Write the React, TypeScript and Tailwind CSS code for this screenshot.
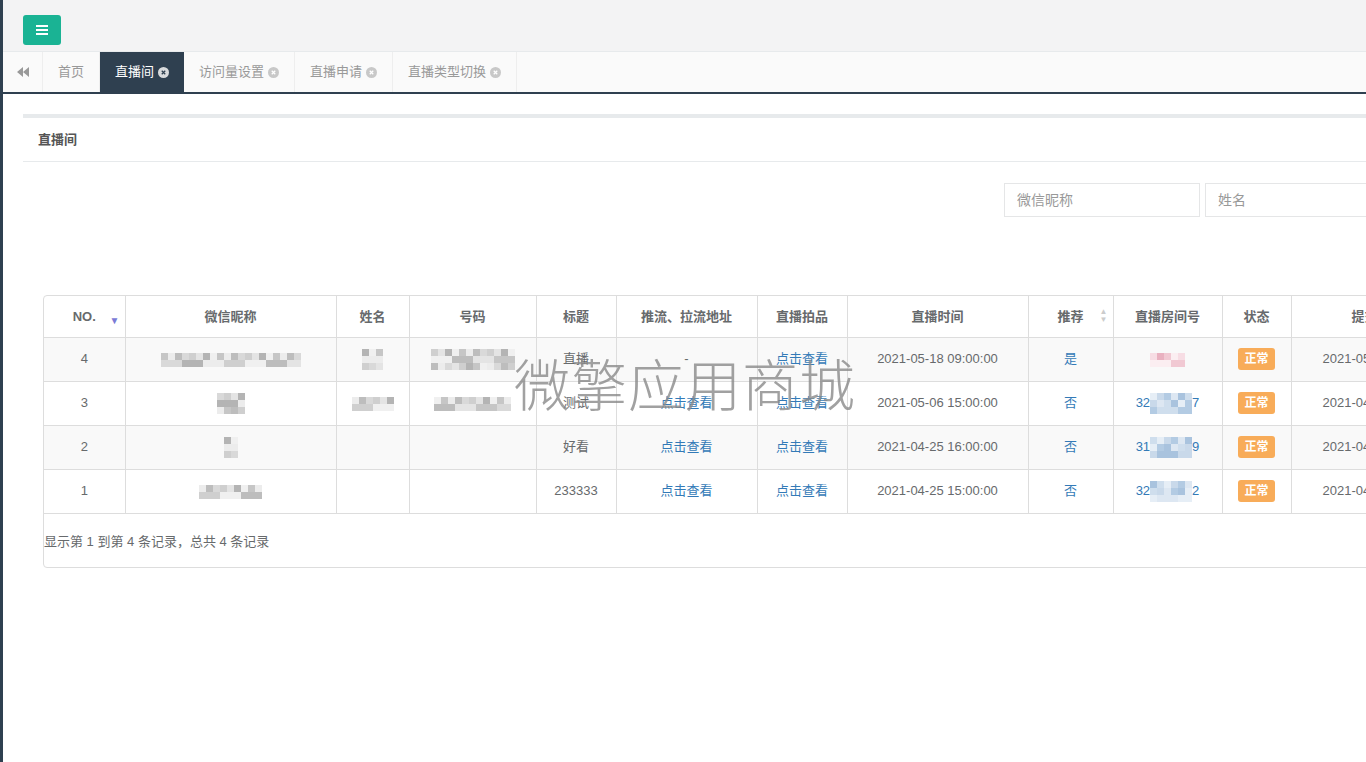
import React from 'react';

const font = { fontFamily: '"Liberation Sans", "Noto Sans CJK SC", sans-serif' };

type Row = {
  no: number;
  nick: [number, number];
  name?: [number, number];
  phone?: [number, number];
  title: string;
  stream: string;
  goods: string;
  time: string;
  rec: string;
  room: { pre: string; post: string; pink?: boolean };
  date: string;
};

const rows: Row[] = [
  { no: 4, nick: [140, 2], name: [24, 3], phone: [86, 3], title: '直播', stream: '-', goods: '点击查看', time: '2021-05-18 09:00:00', rec: '是', room: { pre: '', post: '', pink: true }, date: '2021-05-17 10:21:33' },
  { no: 3, nick: [30, 3], name: [40, 2], phone: [80, 2], title: '测试', stream: '点击查看', goods: '点击查看', time: '2021-05-06 15:00:00', rec: '否', room: { pre: '32', post: '7' }, date: '2021-04-28 11:02:10' },
  { no: 2, nick: [14, 3], title: '好看', stream: '点击查看', goods: '点击查看', time: '2021-04-25 16:00:00', rec: '否', room: { pre: '31', post: '9' }, date: '2021-04-25 14:10:42' },
  { no: 1, nick: [62, 2], title: '233333', stream: '点击查看', goods: '点击查看', time: '2021-04-25 15:00:00', rec: '否', room: { pre: '32', post: '2' }, date: '2021-04-25 13:48:05' },
];

const shades = ['#e4e4e4', '#cfcfcf', '#d9d9d9', '#bdbdbd', '#ececec', '#c6c6c6', '#f0f0f0', '#b4b4b4'];
const blues = ['#c9d9ea', '#b3cbe3', '#dde7f2', '#a9c3de', '#cfdeed', '#e6eef6'];

// pixelated stand-in for the mosaic-blurred cells
function Blur({ w, lines, palette = shades, seed = 1 }: { w: number; lines: number; palette?: string[]; seed?: number }) {
  const cols = Math.max(1, Math.round(w / 7));
  const cells = [];
  for (let r = 0; r < lines; r++) {
    for (let c = 0; c < cols; c++) {
      const i = (c * 7 + r * 13 + seed * 5 + ((c * r) % 3)) % palette.length;
      cells.push(<span key={`${r}-${c}`} className="block h-[7px] w-[7px]" style={{ backgroundColor: palette[i] }} />);
    }
  }
  return (
    <span className="inline-grid align-middle" style={{ gridTemplateColumns: `repeat(${cols}, 7px)` }}>
      {cells}
    </span>
  );
}

function CloseDot({ active }: { active?: boolean }) {
  return (
    <span className={`ml-1 inline-flex h-[11px] w-[11px] items-center justify-center rounded-full ${active ? 'bg-[#d8dadc]' : 'bg-[#c8c8c8]'}`}>
      <svg viewBox="0 0 10 10" className="h-[7px] w-[7px]">
        <path d="M2.5 2.5 L7.5 7.5 M7.5 2.5 L2.5 7.5" stroke={active ? '#2f4050' : '#fff'} strokeWidth="1.8" />
      </svg>
    </span>
  );
}

const tabs = ['访问量设置', '直播申请', '直播类型切换'];
const widths = [81, 211, 73, 127, 80, 141, 90, 181, 85, 109, 69, 150];
const cell = 'border border-[#ddd] whitespace-nowrap';

export default function App() {
  return (
    <div className="relative flex h-[762px] w-[1366px] overflow-hidden bg-white text-[13px] text-[#676a6c]" style={font}>
      <div className="w-[3px] shrink-0 bg-[#2f4050]" />
      <div className="flex min-w-0 flex-1 flex-col">
        {/* top bar */}
        <div className="flex h-[52px] shrink-0 items-start border-b border-[#e7eaec] bg-[#f3f3f4] pl-[20px] pt-[15px]">
          <button className="flex h-[30px] w-[38px] items-center justify-center rounded-[3px] bg-[#1ab394]">
            <svg viewBox="0 0 12 10" className="h-[10px] w-[12px]">
              <path d="M0 1 H12 M0 5 H12 M0 9 H12" stroke="#fff" strokeWidth="1.8" />
            </svg>
          </button>
        </div>
        {/* tabs */}
        <div className="flex h-[42px] shrink-0 border-b-2 border-[#2f4050] bg-[#fafafa]">
          <div className="flex w-[40px] items-center justify-center border-r border-[#eee]">
            <svg viewBox="0 0 12 10" className="h-[10px] w-[12px]">
              <path d="M6 0 L0 5 L6 10 Z M12 0 L6 5 L12 10 Z" fill="#999" />
            </svg>
          </div>
          <div className="flex w-[57px] items-center justify-center border-r border-[#eee] text-[#999]">首页</div>
          <div className="flex w-[84px] items-center justify-center bg-[#2f4050] text-white">
            直播间
            <CloseDot active />
          </div>
          {tabs.map((t) => (
            <div key={t} className="flex items-center border-r border-[#eee] px-[15px] text-[#999]">
              {t}
              <CloseDot />
            </div>
          ))}
        </div>
        {/* content */}
        <div className="flex-1 pl-[20px] pt-[20px]">
          <div className="border-t-4 border-[#e7eaec]">
            <div className="flex h-[44px] items-center border-b border-[#e7eaec] px-[15px] font-bold text-[#555]">直播间</div>
            <div className="flex h-[133px] items-start gap-[5px] pl-[981px] pt-[21px]">
              <input placeholder="微信昵称" className="h-[34px] w-[196px] shrink-0 border border-[#e5e6e7] px-[12px] text-[14px] placeholder:text-[#999]" />
              <input placeholder="姓名" className="h-[34px] w-[196px] shrink-0 border border-[#e5e6e7] px-[12px] text-[14px] placeholder:text-[#999]" />
            </div>
            <div className="ml-[20px] h-[273px] w-[1500px] rounded-[4px] border border-[#ddd]">
              <table className="table-fixed border-collapse text-center" style={{ width: 1397 }}>
                <colgroup>
                  {widths.map((w, i) => (
                    <col key={i} style={{ width: w }} />
                  ))}
                </colgroup>
                <thead>
                  <tr className="h-[41px] font-bold text-[#676a6c]">
                    <th className="relative border-b border-r border-[#ddd]">
                      NO.
                      <span className="absolute right-[5px] top-[17px] text-[10px] text-[#7b7bd6]">▼</span>
                    </th>
                    <th className={`${cell} border-t-0`}>微信昵称</th>
                    <th className={`${cell} border-t-0`}>姓名</th>
                    <th className={`${cell} border-t-0`}>号码</th>
                    <th className={`${cell} border-t-0`}>标题</th>
                    <th className={`${cell} border-t-0`}>推流、拉流地址</th>
                    <th className={`${cell} border-t-0`}>直播拍品</th>
                    <th className={`${cell} border-t-0`}>直播时间</th>
                    <th className={`${cell} relative border-t-0`}>
                      推荐
                      <span className="absolute right-[5px] top-[12px] flex flex-col text-[8px] leading-[8px] text-[#ccc]">
                        <span>▲</span>
                        <span>▼</span>
                      </span>
                    </th>
                    <th className={`${cell} border-t-0`}>直播房间号</th>
                    <th className={`${cell} border-t-0`}>状态</th>
                    <th className={`${cell} border-t-0 pl-[60px] text-left`}>提交时间</th>
                  </tr>
                </thead>
                <tbody>
                  {rows.map((r, i) => (
                    <tr key={r.no} className={`h-[44px] ${i % 2 === 0 ? 'bg-[#f9f9f9]' : 'bg-white'}`}>
                      <td className="border-b border-r border-[#ddd]">{r.no}</td>
                      <td className={cell}>
                        <Blur w={r.nick[0]} lines={r.nick[1]} seed={i + 1} />
                      </td>
                      <td className={cell}>{r.name && <Blur w={r.name[0]} lines={r.name[1]} seed={i + 3} />}</td>
                      <td className={cell}>{r.phone && <Blur w={r.phone[0]} lines={r.phone[1]} seed={i + 5} />}</td>
                      <td className={cell}>{r.title}</td>
                      <td className={`${cell} ${r.stream === '-' ? '' : 'text-[#337ab7]'}`}>{r.stream}</td>
                      <td className={`${cell} text-[#337ab7]`}>{r.goods}</td>
                      <td className={cell}>{r.time}</td>
                      <td className={`${cell} text-[#337ab7]`}>{r.rec}</td>
                      <td className={`${cell} text-[#337ab7]`}>
                        {r.room.pink ? (
                          <Blur w={35} lines={2} palette={['#f1c9d3', '#e9b1c0', '#f7dde4', '#fbeef1']} seed={2} />
                        ) : (
                          <span className="inline-flex items-center">
                            {r.room.pre}
                            <Blur w={42} lines={3} palette={blues} seed={i} />
                            {r.room.post}
                          </span>
                        )}
                      </td>
                      <td className={cell}>
                        <span className="inline-block rounded-[3px] bg-[#f8ac59] px-[6px] py-[3px] text-[12px] font-bold leading-[16px] text-white">正常</span>
                      </td>
                      <td className={`${cell} pl-[31px] text-left`}>{r.date}</td>
                    </tr>
                  ))}
                </tbody>
              </table>
              <div className="pt-[18px]">显示第 1 到第 4 条记录，总共 4 条记录</div>
            </div>
          </div>
        </div>
      </div>
      <div className="pointer-events-none absolute left-[514px] top-[346px] text-[56px] leading-[72px] tracking-[1px] text-[#8a8a8a]/80" style={{ fontFamily: '"Noto Sans CJK SC", sans-serif', fontWeight: 300 }}>
        微擎应用商城
      </div>
    </div>
  );
}
